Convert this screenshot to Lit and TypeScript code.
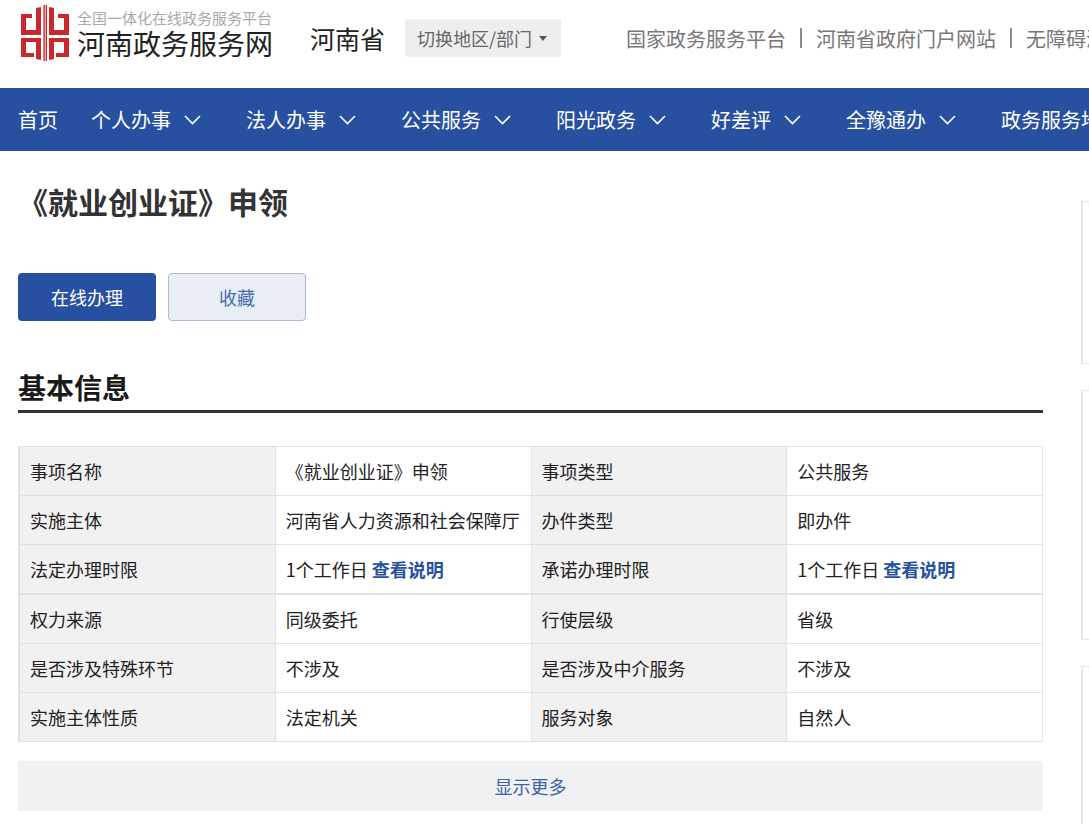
import { LitElement, html, css, svg } from "lit";
import { customElement } from "lit/decorators.js";

const chevron = html`<svg class="chev" viewBox="0 0 17 10" width="17" height="10" aria-hidden="true"><path d="M1 1l7.5 7.5L16 1" fill="none" stroke="currentColor" stroke-width="1.6"/></svg>`;

const logo = svg`<svg class="mark" viewBox="0 0 48 56" width="48" height="56" aria-hidden="true">
  <g fill="#c9282d">
    <path d="M15 3l5-1v28H0V9h11v4H5v12h10z"/>
    <path d="M33 3l-5-1v28h20V9H37v4h6v12H33z"/>
    <path d="M0 33h20v22l-5-1V37H5v11h8v4H0z"/>
    <path d="M48 33H28v22l5-1V37h10v11h-8v4h13z"/>
    <path d="M22.4 0h1.4v56h-1.4zM24.6 0H26v56h-1.4z"/>
  </g>
</svg>`;

const rows: [string, unknown, string, unknown][] = [
  ["事项名称", "《就业创业证》申领", "事项类型", "公共服务"],
  ["实施主体", "河南省人力资源和社会保障厅", "办件类型", "即办件"],
  ["法定办理时限", html`1个工作日 <a class="more">查看说明</a>`, "承诺办理时限", html`1个工作日 <a class="more">查看说明</a>`],
  ["权力来源", "同级委托", "行使层级", "省级"],
  ["是否涉及特殊环节", "不涉及", "是否涉及中介服务", "不涉及"],
  ["实施主体性质", "法定机关", "服务对象", "自然人"],
];

const navItems = ["个人办事", "法人办事", "公共服务", "阳光政务", "好差评", "全豫通办"];

@customElement("app-root")
export class AppRoot extends LitElement {
  static styles = css`
    :host {
      display: block;
      width: 1089px;
      height: 824px;
      overflow: hidden;
      background: #fff;
      font-family: "Noto Sans CJK SC", "Liberation Sans", sans-serif;
      color: #222;
    }
    .top {
      height: 88px;
      display: flex;
      align-items: flex-start;
      white-space: nowrap;
      overflow: hidden;
    }
    .brand {
      display: flex;
      gap: 8px;
      margin: 5px 0 0 21px;
      flex: none;
    }
    .brand-text {
      display: flex;
      flex-direction: column;
      width: 196px;
      padding-top: 4px;
    }
    .slogan {
      font-size: 15px;
      line-height: 17px;
      color: #a9a9a9;
    }
    .site {
      font-size: 28px;
      line-height: 34px;
      color: #222;
    }
    .province {
      font-size: 25px;
      line-height: 38px;
      margin: 19px 0 0 37px;
      color: #222;
      flex: none;
    }
    .switch {
      display: flex;
      align-items: center;
      gap: 7px;
      flex: none;
      height: 38px;
      width: 156px;
      box-sizing: border-box;
      margin: 19px 0 0 20px;
      padding-left: 12px;
      background: #eeeeee;
      border-radius: 3px;
      font-size: 18px;
      color: #666;
    }
    .caret {
      width: 0;
      height: 0;
      border: 4px solid transparent;
      border-top: 5px solid #555;
      border-bottom: 0;
    }
    .links {
      display: flex;
      margin: 19px 0 0 65px;
      height: 38px;
      align-items: center;
      font-size: 20px;
      color: #777;
    }
    .sep {
      width: 30px;
      display: flex;
      justify-content: center;
    }
    .sep i {
      display: block;
      width: 2px;
      height: 20px;
      background: #8a8a8a;
    }
    nav {
      height: 63px;
      background: #2850a0;
      color: #fff;
      display: flex;
      align-items: center;
      padding-left: 18px;
      font-size: 20px;
      white-space: nowrap;
      overflow: hidden;
    }
    .home {
      margin-right: 33px;
    }
    .item {
      display: flex;
      align-items: center;
      gap: 13px;
      margin-right: 45px;
      flex: none;
    }
    .chev {
      flex: none;
    }
    .content {
      display: flex;
      align-items: flex-start;
    }
    main {
      flex: 0 0 1025px;
      margin-left: 18px;
    }
    h1 {
      margin: 28px 0 0;
      font-size: 30px;
      line-height: 44px;
      font-weight: 700;
      color: #333;
    }
    .actions {
      display: flex;
      gap: 12px;
      margin-top: 50px;
    }
    .btn {
      width: 138px;
      height: 48px;
      box-sizing: border-box;
      display: flex;
      align-items: center;
      justify-content: center;
      border-radius: 4px;
      font-size: 18px;
    }
    .primary {
      background: #2850a0;
      color: #fff;
    }
    .secondary {
      background: #e9edf6;
      border: 1px solid #a9bbdd;
      color: #4a6cb0;
    }
    h2 {
      margin: 46px 0 0;
      height: 43px;
      font-size: 28px;
      line-height: 40px;
      font-weight: 700;
      color: #1a1a1a;
      border-bottom: 3px solid #333;
    }
    table {
      width: 1025px;
      margin-top: 33px;
      table-layout: fixed;
      border-collapse: separate;
      border-spacing: 0;
      border-top: 1px solid #e2e2e2;
      border-left: 2px solid #e2e2e2;
      font-size: 18px;
    }
    td {
      height: 48px;
      box-sizing: content-box;
      padding: 0 0 0 10px;
      border-right: 1px solid #e2e2e2;
      border-bottom: 1px solid #e2e2e2;
      color: #222;
      white-space: nowrap;
    }
    td.label {
      background: #f1f1f1;
    }
    tr.heavy td {
      border-bottom-width: 2px;
    }
    .more {
      color: #2850a0;
      font-weight: 700;
    }
    .show-more {
      margin-top: 19px;
      height: 50px;
      background: #f0f1f3;
      display: flex;
      align-items: center;
      justify-content: center;
      font-size: 18px;
      color: #3d62a8;
    }
    aside {
      flex: none;
      width: 200px;
      margin: 50px 0 0 38px;
      display: flex;
      flex-direction: column;
      gap: 26px;
    }
    .panel {
      box-sizing: border-box;
      border: 1px solid #e6e6e6;
      border-left-width: 2px;
    }
    .p1 { height: 163px; }
    .p2 { height: 250px; }
    .p3 { height: 300px; }
  `;

  render() {
    return html`
      <div class="top">
        <div class="brand">
          ${logo}
          <div class="brand-text">
            <span class="slogan">全国一体化在线政务服务平台</span>
            <span class="site">河南政务服务网</span>
          </div>
        </div>
        <div class="province">河南省</div>
        <div class="switch">切换地区/部门<span class="caret"></span></div>
        <div class="links">
          <span>国家政务服务平台</span><span class="sep"><i></i></span>
          <span>河南省政府门户网站</span><span class="sep"><i></i></span>
          <span>无障碍浏览</span>
        </div>
      </div>
      <nav>
        <span class="home">首页</span>
        ${navItems.map((n) => html`<span class="item">${n}${chevron}</span>`)}
        <span class="item">政务服务地图</span>
      </nav>
      <div class="content">
        <main>
          <h1>《就业创业证》申领</h1>
          <div class="actions">
            <div class="btn primary">在线办理</div>
            <div class="btn secondary">收藏</div>
          </div>
          <h2>基本信息</h2>
          <table>
            <tbody>
              ${rows.map(
                (r, i) => html`<tr class=${i === 2 ? "heavy" : ""}>
                  <td class="label">${r[0]}</td>
                  <td>${r[1]}</td>
                  <td class="label">${r[2]}</td>
                  <td>${r[3]}</td>
                </tr>`
              )}
            </tbody>
          </table>
          <div class="show-more">显示更多</div>
        </main>
        <aside>
          <div class="panel p1"></div>
          <div class="panel p2"></div>
          <div class="panel p3"></div>
        </aside>
      </div>
    `;
  }
}
